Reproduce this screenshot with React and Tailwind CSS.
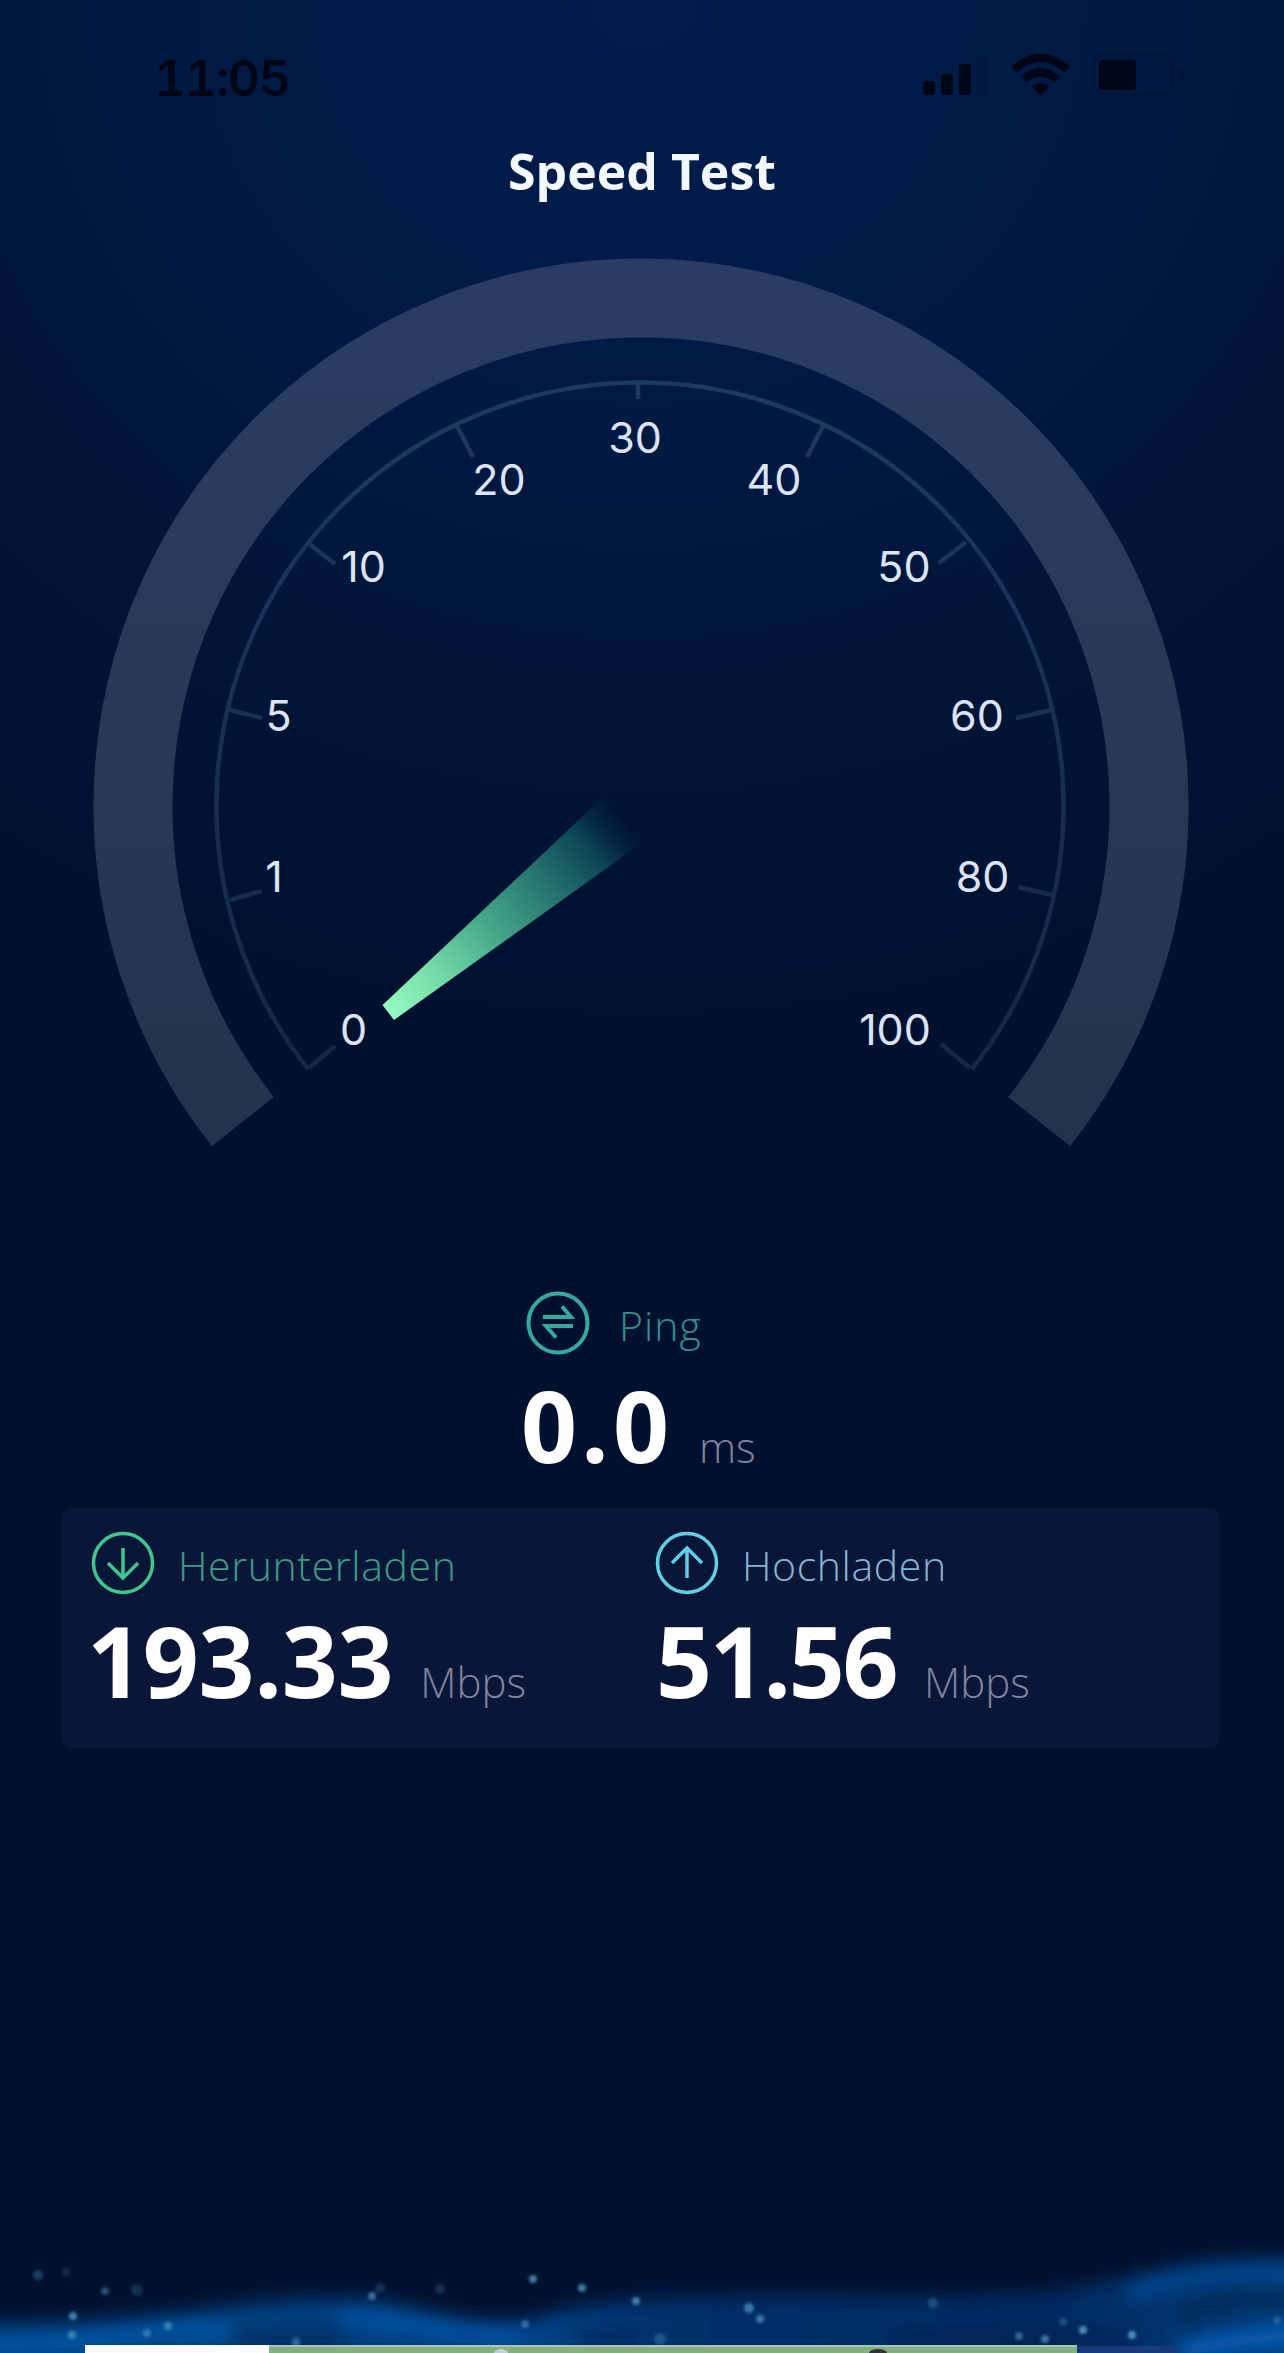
import React from "react";

const CX = 641;
const CY = 806;
const SWEEP_END = (38.4 * Math.PI) / 180;

const arcPath = (cx, cy, r) => {
  const dx = r * Math.cos(SWEEP_END);
  const y = cy + r * Math.sin(SWEEP_END);
  return `M${cx - dx} ${y}A${r} ${r} 0 1 1 ${cx + dx} ${y}`;
};

const TICKS = [
  { label: "0", x: 353.5, y: 1045, line: [309, 1068, 335, 1046] },
  { label: "1", x: 274, y: 892, line: [230, 900, 262, 891] },
  { label: "5", x: 278.5, y: 731, line: [230, 710, 262, 718] },
  { label: "10", x: 363.5, y: 582, line: [308, 543, 335, 564] },
  { label: "20", x: 499, y: 495, line: [456, 424, 473, 457] },
  { label: "30", x: 635, y: 453, line: [638, 382, 638, 399] },
  { label: "40", x: 774, y: 495, line: [824, 424, 807, 457] },
  { label: "50", x: 904, y: 582, line: [966, 542, 939, 563] },
  { label: "60", x: 977, y: 731, line: [1052, 710, 1016, 718] },
  { label: "80", x: 982.5, y: 892, line: [1052, 895, 1018, 887] },
  { label: "100", x: 895, y: 1045, line: [970, 1068, 941, 1044] },
];

const SPARKS = [
  [38, 95, 5, 0.3], [66, 92, 4, 0.18], [105, 111, 4, 0.4], [137, 110, 6, 0.2],
  [73, 136, 4, 0.7], [72, 155, 4, 0.6], [168, 146, 4, 0.6], [147, 153, 4, 0.5],
  [372, 116, 4, 0.6], [380, 108, 5, 0.2], [440, 109, 5, 0.2], [533, 99, 4, 0.7],
  [582, 108, 4, 0.7], [525, 144, 4, 0.5], [636, 121, 4, 0.7], [296, 162, 4, 0.5],
  [749, 128, 5, 0.6], [760, 139, 4, 0.6], [660, 159, 6, 0.3], [933, 123, 5, 0.3],
  [1019, 156, 4, 0.5], [1045, 159, 4, 0.6], [1063, 142, 4, 0.3], [1083, 150, 4, 0.8],
  [1132, 155, 4, 0.8], [1277, 140, 4, 0.3],
];

const StatusBar = () => (
  <div className="flex items-start justify-between pt-[53px] pl-[154px] pr-[96px] text-[#010616]">
    <span className="font-['Inter',sans-serif] text-[50px] font-semibold leading-[50px] tabular-nums tracking-[-1.5px]">11:05</span>
    <svg className="h-[50px] w-[270px]" viewBox="918 53 270 50" fill="currentColor">
      <rect x="923" y="81" width="12" height="14" rx="3" />
      <rect x="941" y="74" width="12" height="21" rx="3" />
      <rect x="959" y="64" width="12" height="31" rx="3" />
      <rect x="977" y="56" width="10" height="39" rx="3" opacity="0.12" />
      <g fill="none" stroke="currentColor" strokeWidth="8">
        <path d="M1014 69.500Q1040.500 46 1067 69.500" />
        <path d="M1024 79.500Q1040.500 65 1057 79.500" />
      </g>
      <path d="M1032 87Q1040.500 79 1049 87L1040.500 96Z" />
      <rect x="1094" y="55" width="79" height="39" rx="11" fill="none" stroke="currentColor" strokeWidth="2.500" opacity="0.22" />
      <rect x="1099" y="60" width="37" height="30" rx="4" />
      <path d="M1178 68q8 3 8 7t-8 7z" opacity="0.25" />
    </svg>
  </div>
);

const Gauge = () => (
  <svg className="mt-[53px] h-[900px] w-full shrink-0" viewBox="0 250 1284 900">
    <defs>
      <linearGradient id="needle" gradientUnits="userSpaceOnUse" x1="388" y1="1012" x2="626" y2="817">
        <stop offset="0" stopColor="#96fbc2" />
        <stop offset="0.2" stopColor="#74dba8" />
        <stop offset="0.42" stopColor="#46aa8b" />
        <stop offset="0.65" stopColor="#26766f" />
        <stop offset="0.85" stopColor="#0b4353" />
        <stop offset="1" stopColor="#04254a" stopOpacity="0" />
      </linearGradient>
      <linearGradient id="track" x1="0" y1="0" x2="0" y2="1">
        <stop offset="0" stopColor="#293c63" />
        <stop offset="0.5" stopColor="#263a56" />
        <stop offset="1" stopColor="#25324d" />
      </linearGradient>
      <linearGradient id="scale" gradientUnits="userSpaceOnUse" x1="0" y1="380" x2="0" y2="1070">
        <stop offset="0" stopColor="#1a3a5e" />
        <stop offset="1" stopColor="#132846" />
      </linearGradient>
    </defs>
    <path d={arcPath(CX, CY, 508)} fill="none" stroke="url(#track)" strokeWidth="79" />
    <g fill="none" stroke="url(#scale)" strokeWidth="4.500">
      <path d={arcPath(640, CY, 423.5)} />
      {TICKS.filter(({ label }) => label !== "30").map(({ label, line }) => (
        <path key={label} d={`M${line[0]} ${line[1]}L${line[2]} ${line[3]}`} />
      ))}
      <path d="M638 382V399" stroke="#1a3a5e" />
    </g>
    <path d="M382.500 1005L602 798L642 843L394 1020Z" fill="url(#needle)" />
    <g className="font-['Inter',sans-serif] text-[43px]" fill="#dce4fb" textAnchor="middle">
      {TICKS.map(({ label, x, y }) => (
        <text key={label} x={x} y={y}>{label}</text>
      ))}
    </g>
  </svg>
);

const CircleIcon = ({ className, strokeWidth, children }) => (
  <svg className={`size-16 shrink-0 ${className}`} viewBox="0 0 64 64" fill="none" stroke="currentColor" strokeWidth={strokeWidth}>
    <circle cx="32" cy="32" r="29.500" />
    {children}
  </svg>
);

const Metric = ({ icon, label, labelClass, value, valueClass, unit, unitClass }) => (
  <div>
    <div className="flex items-center">
      {icon}
      <span className={`pt-[3px] text-[41px] font-[340] leading-[42px] whitespace-nowrap ${labelClass}`}>{label}</span>
    </div>
    <div className="flex items-baseline whitespace-nowrap leading-none">
      <span className={`text-[98px] font-bold text-white ${valueClass}`}>{value}</span>
      <span className={`text-[42px] font-[320] text-[#7f849f] ${unitClass}`}>{unit}</span>
    </div>
  </div>
);

const BottomWave = () => (
  <svg className="mt-auto h-[173px] w-full shrink-0" viewBox="0 0 1284 173">
    <defs>
      <filter id="soft" x="-10%" y="-60%" width="120%" height="220%">
        <feGaussianBlur stdDeviation="9" />
      </filter>
      <filter id="spark" x="-100%" y="-100%" width="300%" height="300%">
        <feGaussianBlur stdDeviation="1.400" />
      </filter>
      <linearGradient id="wave" x1="0" y1="0" x2="1" y2="0">
        <stop offset="0" stopColor="#044484" />
        <stop offset="0.28" stopColor="#043d7c" />
        <stop offset="0.4" stopColor="#04458b" />
        <stop offset="0.52" stopColor="#03306a" />
        <stop offset="0.8" stopColor="#022b60" />
        <stop offset="1" stopColor="#043f80" />
      </linearGradient>
    </defs>
    <g filter="url(#soft)">
      <path d="M-30 142C60 145 130 138 200 130C270 119 350 112 400 125C450 137 500 150 540 137C580 123 620 122 670 119C800 112 900 121 1040 113C1130 104 1170 76 1320 80V210H-30Z" fill="url(#wave)" />
      <path d="M-20 164C60 166 110 151 230 148" fill="none" stroke="#0559ab" strokeWidth="13" />
      <path d="M340 138C420 140 450 154 520 151" fill="none" stroke="#0557ac" strokeWidth="13" />
      <path d="M1130 112C1190 88 1230 86 1310 90" fill="none" stroke="#064b96" strokeWidth="15" />
      <path d="M240 161H340M580 158H630M900 158H1130" stroke="#021c49" strokeWidth="14" strokeLinecap="round" opacity="0.7" />
      <path d="M1180 136Q1240 112 1300 121" fill="none" stroke="#02264f" strokeWidth="16" />
      <path d="M1180 172C1230 160 1260 158 1310 153" fill="none" stroke="#0864bf" strokeWidth="14" />
    </g>
    <g fill="#5fa8d2" filter="url(#spark)">
      {SPARKS.map(([x, y, r, opacity]) => (
        <circle key={`${x}-${y}`} cx={x} cy={y} r={r} opacity={opacity} />
      ))}
    </g>
    <rect x="85" y="165" width="184" height="8" fill="#fbfcff" />
    <rect x="269" y="165" width="808" height="8" fill="#85ae83" />
    <rect x="269" y="165" width="808" height="2" fill="#abc5b8" />
    <rect x="1077" y="166" width="100" height="7" fill="#183a7a" />
    <ellipse cx="501" cy="173" rx="7" ry="4" fill="#c6d0d4" />
    <ellipse cx="878" cy="173" rx="9" ry="4" fill="#34353c" />
  </svg>
);

export default function App() {
  return (
    <div className="flex h-[2353px] w-[1284px] flex-col overflow-hidden bg-[#00112f] bg-[radial-gradient(ellipse_1150px_1050px_at_50%_0%,#001c4d_0%,#001b46_30%,#001538_65%,#00112f_100%)] font-['Open_Sans',sans-serif]">
      <StatusBar />
      <h1 className="mt-[43px] mb-px text-center text-[50px] font-bold leading-none text-[#f3f8ff]">Speed Test</h1>
      <Gauge />

      <div className="mx-auto mt-[141px] w-[232px]">
        <Metric
          icon={
            <CircleIcon className="text-[#36a99e]" strokeWidth="4">
              <path d="M17 26H45L36 15.500" />
              <path d="M47 35H20L30 46.500" />
            </CircleIcon>
          }
          label="Ping"
          labelClass="ml-[29px] tracking-[1px] text-[#338f91]"
          value="0.0"
          valueClass="mt-[21px] -ml-[5px] tracking-[4px]"
          unit="ms"
          unitClass="ml-[26px]"
        />
      </div>

      <div className="mr-[64px] ml-[61px] mt-[34px] grid h-[240px] grid-cols-[564px_1fr] rounded-xl bg-[#0a1638] pt-[23px] pl-[30px]">
        <Metric
          icon={
            <CircleIcon className="text-[#3fc78d]" strokeWidth="3.500">
              <path d="M32 17V47M17 32L32 47L47 32" />
            </CircleIcon>
          }
          label="Herunterladen"
          labelClass="ml-[23px] tracking-[0.6px] text-[#3a9c85]"
          value="193.33"
          valueClass="mt-4 -ml-[4px] tracking-[-0.3px]"
          unit="Mbps"
          unitClass="ml-[27px]"
        />
        <Metric
          icon={
            <CircleIcon className="text-[#5fd0e4]" strokeWidth="3.500">
              <path d="M32 47V17M17 32L32 17L47 32" />
            </CircleIcon>
          }
          label="Hochladen"
          labelClass="ml-[23px] tracking-[0.6px] text-[#84b4d2]"
          value="51.56"
          valueClass="mt-4 ml-px tracking-[-2.400px]"
          unit="Mbps"
          unitClass="ml-[28px]"
        />
      </div>

      <BottomWave />
    </div>
  );
}
